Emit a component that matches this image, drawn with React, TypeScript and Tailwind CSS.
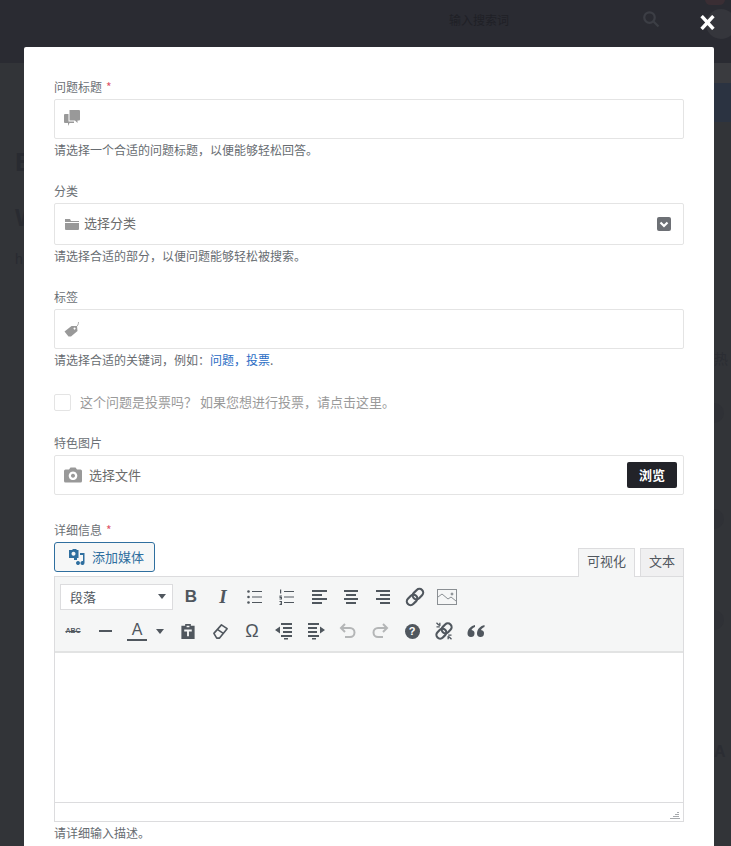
const cjk = "font-['Noto_Sans_CJK_SC','Liberation_Sans',sans-serif]"

function Icon({ children, className = '' }: { children: React.ReactNode; className?: string }) {
  return (
    <svg viewBox="0 0 20 20" className={`h-5 w-5 ${className}`} fill="currentColor">
      {children}
    </svg>
  )
}

function Tool({ children, muted }: { children: React.ReactNode; muted?: boolean }) {
  return (
    <div className={`flex h-6 w-8 shrink-0 items-center justify-center ${muted ? 'text-[#b4b6b7]' : 'text-[#50575e]'}`}>
      {children}
    </div>
  )
}

function Label({ text, required }: { text: string; required?: boolean }) {
  return (
    <div className="h-[18px] text-[12px] leading-[18px] text-[#6b7075]">
      {text}
      {required && <span className="ml-1 text-[#e0566a]">*</span>}
    </div>
  )
}

function Hint({ children }: { children: React.ReactNode }) {
  return <p className="mt-[2px] h-[18px] text-[12px] leading-[18px] text-[#676c71]">{children}</p>
}

function FieldBox({ children, height }: { children: React.ReactNode; height: string }) {
  return (
    <div className={`mt-[3px] flex ${height} items-center rounded-[2px] border border-[#e4e4e4] bg-white pl-[9px] pr-1.5`}>
      {children}
    </div>
  )
}

function Backdrop() {
  return (
    <div className="flex h-full flex-col">
      <div className="flex h-[63px] shrink-0 items-start bg-[#2a2b32] pl-[449px] pt-[11px]">
        <span className="text-[12px] leading-[18px] text-[#1f2026]">输入搜索词</span>
        <svg viewBox="0 0 24 24" className="ml-[133px] mt-[-1px] h-[18px] w-[18px] text-[#3c3e45]" fill="none" stroke="currentColor" strokeWidth="3">
          <circle cx="10" cy="10" r="7" />
          <path d="m15 15 7 7" />
        </svg>
      </div>
      <div className="flex grow justify-between">
        <div className="flex flex-col pl-[15px] pt-[84px] font-['Liberation_Sans'] font-bold text-[#292b31]">
          <span className="text-[26px] leading-[30px]">E</span>
          <span className="mt-[26px] text-[24px] leading-[30px]">W</span>
          <span className="mt-[18px] text-[14px] font-normal leading-[16px]">h</span>
        </div>
        <div className="flex w-[17px] flex-col text-[#2b2d33]">
          <div className="h-5 bg-[#3a3b3f]" />
          <div className="h-[39px] bg-[#2b3341]" />
          <span className="mt-[226px] text-[14px] leading-[20px]">热</span>
          <span className="mt-[35px] h-5 w-[10px] rounded-r-full bg-[#2f3136]" />
          <span className="mt-[86px] h-5 w-[10px] rounded-r-full bg-[#2f3136]" />
          <span className="mt-[81px] h-5 w-[10px] rounded-r-full bg-[#2f3136]" />
          <span className="mt-[112px] font-['Liberation_Sans'] text-[16px] font-bold leading-[20px]">A</span>
        </div>
      </div>
    </div>
  )
}

export default function App() {
  return (
    <div className={`relative h-[846px] w-[731px] overflow-hidden bg-[#323438] ${cjk}`}>
      {/* dimmed page behind the modal */}
      <Backdrop />
      <span className="absolute right-[-5px] top-[9px] h-[30px] w-[30px] rounded-full bg-[#35363c]" />
      <span className="absolute right-[6px] top-[-6px] h-[11px] w-5 rounded-full bg-[#3a2e34]" />

      <button className="absolute right-[16px] top-[15px] text-white">
        <svg viewBox="0 0 14 14" className="h-[15px] w-[15px]" fill="none" stroke="currentColor" strokeWidth="3.2">
          <path d="M1.5 1 12.5 13M12.5 1 1.5 13" />
        </svg>
      </button>

      <div className="absolute left-[24px] top-[47px] h-[820px] w-[690px] rounded-[2px] bg-white px-[30px] pt-[31px]">
        <Label text="问题标题" required />
        <FieldBox height="h-10">
          <svg viewBox="0 0 16 16" className="mb-[3px] h-4 w-4 text-[#999]" fill="currentColor">
            <path d="M5.500 0h9.500a1 1 0 0 1 1 1v8.500a1 1 0 0 1-1 1h-1.500V13l-2.500-2.500H5.500z" />
            <path d="M1 4h3.500v7.500H10V13H5.500L4 16v-3H1a1 1 0 0 1-1-1V5a1 1 0 0 1 1-1z" />
          </svg>
        </FieldBox>
        <Hint>请选择一个合适的问题标题，以便能够轻松回答。</Hint>

        <div className="mt-[23px]">
          <Label text="分类" />
        </div>
        <FieldBox height="h-[42px]">
          <svg viewBox="0 0 16 16" className="h-4 w-4 text-[#999]" fill="currentColor">
            <path d="M1 3h5l1 2h8v1H1zM1 7h14v6a1 1 0 0 1-1 1H2a1 1 0 0 1-1-1z" />
          </svg>
          <span className="mb-[3px] ml-[4px] text-[13px] text-[#6b6b6b]">选择分类</span>
          <span className="ml-auto mr-[6px] flex h-[14px] w-[14px] items-center justify-center rounded-[2px] bg-[#6d7075] text-white">
            <svg viewBox="0 0 12 12" className="h-3 w-3" fill="none" stroke="currentColor" strokeWidth="2.200">
              <path d="m2.500 4.500 3.500 3.500 3.500-3.500" />
            </svg>
          </span>
        </FieldBox>
        <Hint>请选择合适的部分，以便问题能够轻松被搜索。</Hint>

        <div className="mt-[23px]">
          <Label text="标签" />
        </div>
        <FieldBox height="h-10">
          <svg viewBox="0 0 16 16" className="h-4 w-4 text-[#999]" fill="currentColor">
            <path d="M.500 10.500 7.500 5h5.500l.5 5-6.500 5.500h-2.500zM10.500 6.500a1 1 0 1 0 .1 0z" fillRule="evenodd" />
            <path d="M12 6c1.500-1 2.500-2.500 2.500-5" fill="none" stroke="currentColor" strokeWidth="0.8" />
          </svg>
        </FieldBox>
        <Hint>
          请选择合适的关键词，例如：<span className="text-[#2a6cc4]">问题，投票</span>.
        </Hint>

        <label className="mt-[24px] flex h-[18px] items-center">
          <span className="h-[17px] w-[17px] rounded-[2px] border border-[#e4e4e4] bg-white" />
          <span className="ml-[9px] text-[13px] text-[#9a9a9a]">这个问题是投票吗？ 如果您想进行投票，请点击这里。</span>
        </label>

        <div className="mt-[23px]">
          <Label text="特色图片" />
        </div>
        <FieldBox height="h-10">
          <svg viewBox="0 0 18 16" className="h-4 w-[18px] text-[#999]" fill="currentColor">
            <path
              fillRule="evenodd"
              d="M1.500 2.500H5L6.500.5h5L13 2.500h3.500A1.500 1.500 0 0 1 18 4v10a1.500 1.500 0 0 1-1.500 1.500h-15A1.500 1.500 0 0 1 0 14V4a1.500 1.500 0 0 1 1.500-1.500zM9 4.500a4.300 4.300 0 1 0 .01 0zM9 6.800a2 2 0 1 1-.01 0z"
            />
          </svg>
          <span className="ml-[7px] text-[13px] text-[#6b6b6b]">选择文件</span>
          <button className="ml-auto h-[26px] w-[50px] rounded-[2px] bg-[#222329] text-[13px] font-bold text-white">浏览</button>
        </FieldBox>

        <div className="mt-[26px]">
          <Label text="详细信息" required />
        </div>

        <div className="mt-[-1px] flex h-[38px] items-end justify-between">
          <button className="mb-[4px] flex h-[30px] w-[101px] items-center gap-[6px] rounded-[3px] border border-[#2f6f9f] bg-[#f6f7f7] pb-px pl-[13px] text-[13px] text-[#2f6f9f]">
            <svg viewBox="0 0 18 18" className="h-[18px] w-[18px]" fill="currentColor">
              <path fillRule="evenodd" d="M1 2h3l1-1h3l1 1h1.500v8H9v2H6v-2H1zM5.500 3.700a2 2 0 1 0 .01 0z" />
              <path d="M12 5h4.500v10a2 2 0 1 1-1.500-2V7H12zM8 15a2 2 0 1 0 0-.1z" />
            </svg>
            添加媒体
          </button>
          <div className="flex items-start text-[13px] text-[#50575e]">
            <span className="z-10 mb-[-1px] flex h-[29px] w-[57px] items-center justify-center border border-b-0 border-[#dcdcde] bg-[#f5f6f6] pb-[5px]">可视化</span>
            <span className="ml-[5px] flex h-[28px] w-[44px] items-center justify-center border border-b-0 border-[#dcdcde] bg-[#f0f0f1] pb-[4px]">文本</span>
          </div>
        </div>

        <div className="border border-[#dcdcde]">
          <div className="flex h-[76px] flex-col border-b-2 border-[#e2e3e3] bg-[#f5f6f6] pl-[5px]">
            <div className="mt-[7px] flex h-[26px] items-center">
              <div className="flex h-[26px] w-[113px] items-center justify-between border border-[#dcdcde] bg-white pb-px pl-[9px] pr-[6px] text-[13px] text-[#50575e]">
                段落
                <span className="h-0 w-0 border-x-[4px] border-t-[5px] border-x-transparent border-t-[#50575e]" />
              </div>
              <div className="ml-[2px] flex">
                <Tool><span className="font-['Liberation_Sans'] text-[17px] font-bold">B</span></Tool>
                <Tool><span className="font-['Liberation_Serif'] text-[19px] font-bold italic">I</span></Tool>
                <Tool>
                  <Icon>
                    <circle cx="3.500" cy="4.500" r="1.300" />
                    <circle cx="3.500" cy="10" r="1.300" />
                    <circle cx="3.500" cy="15.500" r="1.300" />
                    <path d="M7 4h10v1H7zM7 9.500h10v1H7zM7 15h10v1H7z" />
                  </Icon>
                </Tool>
                <Tool>
                  <Icon>
                    <path d="M3 2.500h1.200v4H3zM2.500 8.500h2.500v1H3.500v.5H5v2.500H2.500v-1h1.500V11H2.500zM2.500 14h2.500v4H2.500v-1h1.500v-.5H3v-.8h1V15H2.500z" />
                    <path d="M7 4h10v1H7zM7 9.500h10v1H7zM7 15h10v1H7z" />
                  </Icon>
                </Tool>
                <Tool>
                  <Icon>
                    <path d="M3 3h15v2H3zM3 7h10v2H3zM3 11h15v2H3zM3 15h10v2H3z" />
                  </Icon>
                </Tool>
                <Tool>
                  <Icon>
                    <path d="M3 3h14v2H3zM5 7h10v2H5zM3 11h14v2H3zM5 15h10v2H5z" />
                  </Icon>
                </Tool>
                <Tool>
                  <Icon>
                    <path d="M3 3h14v2H3zM7 7h10v2H7zM3 11h14v2H3zM7 15h10v2H7z" />
                  </Icon>
                </Tool>
                <Tool>
                  <svg viewBox="0 0 24 24" className="h-5 w-5" fill="none" stroke="currentColor" strokeWidth="2.600">
                    <g transform="rotate(-45 12 12)">
                      <rect x="0" y="7.500" width="14" height="9" rx="4.500" />
                      <rect x="10" y="7.500" width="14" height="9" rx="4.500" />
                    </g>
                  </svg>
                </Tool>
                <Tool>
                  <svg viewBox="0 0 20 16" className="h-4 w-5 text-[#8a8f93]" fill="none" stroke="currentColor" strokeWidth="1">
                    <rect x="0.500" y="0.500" width="19" height="15" />
                    <path d="m1 8 4-3 6 5 3-2 5 4" />
                    <circle cx="15" cy="5" r="1" fill="currentColor" />
                  </svg>
                </Tool>
              </div>
            </div>
            <div className="ml-[-3px] mt-[8px] flex h-[26px] items-center">
              <Tool><span className="font-['Liberation_Sans'] text-[7px] font-bold line-through">ABC</span></Tool>
              <Tool><span className="h-[2px] w-[13px] bg-[#50575e]" /></Tool>
              <Tool>
                <div className="flex flex-col items-center">
                  <span className="font-['Liberation_Sans'] text-[16px] leading-[17px]">A</span>
                  <span className="mt-px h-[2px] w-5 bg-[#50575e]" />
                </div>
              </Tool>
              <span className="ml-[3px] mr-[8px] h-0 w-0 border-x-[4px] border-t-[5px] border-x-transparent border-t-[#50575e]" />
              <Tool>
                <svg viewBox="0 0 16 18" className="h-[17px] w-[16px]" fill="currentColor">
                  <path d="M1 3h4V1h6v2h4v14H1zM6.500 3v1.500h3V3zM4 7v2h3v5h2V9h3V7z" fillRule="evenodd" />
                </svg>
              </Tool>
              <Tool>
                <svg viewBox="0 0 18 18" className="h-[17px] w-[17px]" fill="none" stroke="currentColor" strokeWidth="1.700" strokeLinejoin="round">
                  <path d="m2 11 8-9 6 4-8 10H5z" />
                  <path d="M6 7l6 4" />
                </svg>
              </Tool>
              <Tool><span className="font-['Liberation_Sans'] text-[18px]">Ω</span></Tool>
              <Tool>
                <Icon>
                  <path d="M7 2h11v2H7zM9 6h9v2H9zM9 10h9v2H9zM7 14h11v2H7zM10 17h4v1.500h-4zM1 9l5-3.500v7z" />
                </Icon>
              </Tool>
              <Tool>
                <Icon>
                  <path d="M2 2h11v2H2zM2 6h9v2H2zM2 10h9v2H2zM2 14h11v2H2zM6 17h4v1.500H6zM19 9l-5-3.500v7z" />
                </Icon>
              </Tool>
              <Tool muted>
                <svg viewBox="0 0 20 20" className="h-5 w-5" fill="none" stroke="currentColor" strokeWidth="2">
                  <path d="M7 3 3 7l4 4M3 7h9a4 4 0 0 1 0 9H7" />
                </svg>
              </Tool>
              <Tool muted>
                <svg viewBox="0 0 20 20" className="h-5 w-5" fill="none" stroke="currentColor" strokeWidth="2">
                  <path d="m13 3 4 4-4 4M17 7H8a4 4 0 0 0 0 9h5" />
                </svg>
              </Tool>
              <Tool>
                <span className="flex h-[15px] w-[15px] items-center justify-center rounded-full bg-[#50575e] font-['Liberation_Sans'] text-[11px] font-bold text-white">?</span>
              </Tool>
              <Tool>
                <svg viewBox="0 0 24 24" className="h-5 w-5" fill="none" stroke="currentColor" strokeWidth="2.600">
                  <g transform="rotate(-45 12 12)">
                    <rect x="1" y="7.500" width="13" height="9" rx="4.500" />
                    <rect x="10" y="7.500" width="13" height="9" rx="4.500" />
                  </g>
                  <path d="M3 7h4M7 2v4M6 5 3 2M21 17h-4M17 22v-4M18 19l3 3" strokeWidth="1.600" />
                </svg>
              </Tool>
              <Tool>
                <svg viewBox="0 0 18 14" className="h-[14px] w-[18px]" fill="currentColor">
                  <path d="M8 1C4 2 .5 5 .5 9.500a3.500 3.500 0 1 0 4-3.500C5 4.500 6.500 3.500 8 3zM17.500 1c-4 1-7.500 4-7.500 8.500a3.500 3.500 0 1 0 4-3.500c.5-1.500 2-2.500 3.500-3z" />
                </svg>
              </Tool>
            </div>
          </div>
          <div className="h-[149px] bg-white" />
          <div className="relative h-[19px] border-t border-[#dcdcde] bg-white">
            <svg viewBox="0 0 10 10" className="absolute bottom-px right-[3px] h-[10px] w-[10px] text-[#a7aaad]" stroke="currentColor" strokeWidth="1">
              <path d="M7 2.500h2M5 4.500h4M3 6.500h6M0 8.500h10" />
            </svg>
          </div>
        </div>
        <Hint>请详细输入描述。</Hint>
      </div>
    </div>
  )
}
